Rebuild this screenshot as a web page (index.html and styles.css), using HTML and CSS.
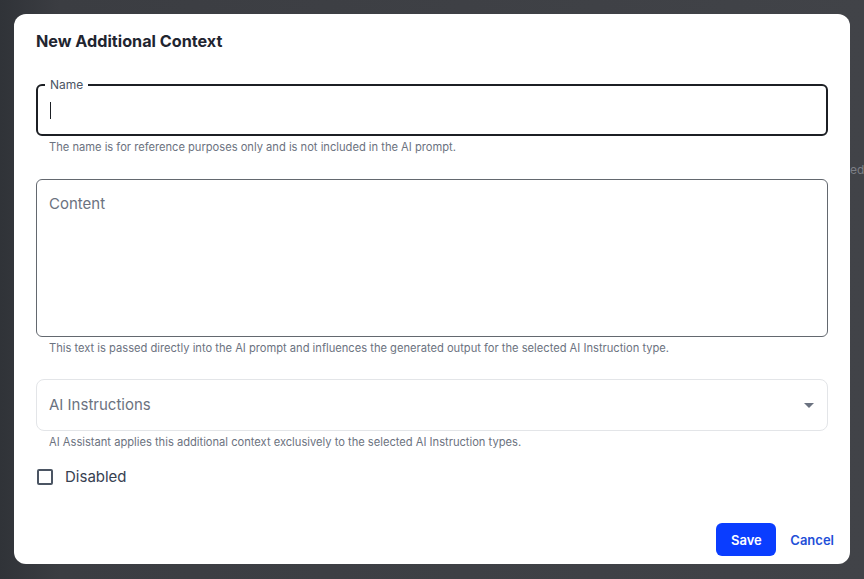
FILE: index.html
```html
<!DOCTYPE html>
<html lang="en">
<head>
    <meta charset="UTF-8">
    <meta name="viewport" content="width=device-width, initial-scale=1.0">
    <title>New Additional Context</title>
    <link rel="stylesheet" href="styles.css">
</head>
<body>
    <span class="behind-text">ed</span>

    <div class="modal">
        <h2 class="modal-title">New Additional Context</h2>

        <div class="field field-focused">
            <span class="field-label">Name</span>
            <span class="caret"></span>
        </div>
        <div class="helper">The name is for reference purposes only and is not included in the AI prompt.</div>

        <div class="field field-area">
            <span class="placeholder">Content</span>
        </div>
        <div class="helper">This text is passed directly into the AI prompt and influences the generated output for the selected AI Instruction type.</div>

        <div class="field field-select">
            <span class="placeholder">AI Instructions</span>
            <svg class="arrow" width="10" height="5" viewBox="0 0 10 5">
                <path d="M0 0 L10 0 L5 5 Z" fill="#6b7280"/>
            </svg>
        </div>
        <div class="helper">AI Assistant applies this additional context exclusively to the selected AI Instruction types.</div>

        <label class="check-row">
            <span class="checkbox"></span>
            <span>Disabled</span>
        </label>

        <div class="modal-footer">
            <button class="btn-save">Save</button>
            <button class="btn-cancel">Cancel</button>
        </div>
    </div>
</body>
</html>
```

FILE: styles.css
```css
* {
    margin: 0;
    padding: 0;
    box-sizing: border-box;
    font-family: Inter, "Noto Sans", sans-serif;
}

body {
    width: 864px;
    height: 579px;
    padding: 14px;
    background: linear-gradient(to right, #303338 0, #3b3d42 60px, #414348 100%);
    position: relative;
    overflow: hidden;
}

.behind-text {
    position: absolute;
    left: 850px;
    top: 161px;
    font-size: 12px;
    line-height: 18px;
    color: #7c7f85;
}

.modal {
    position: relative;
    width: 836px;
    height: 550px;
    background-color: #fff;
    border-radius: 12px;
    padding: 15px 22px 8px 22px;
    display: flex;
    flex-direction: column;
}

.modal-title {
    font-size: 16.2px;
    line-height: 24px;
    font-weight: 700;
    color: #1f2530;
    margin-bottom: 31px;
}

.field {
    position: relative;
    border: 1px solid #63686f;
    border-radius: 6px;
    display: flex;
    align-items: center;
    padding: 0 12px;
}

.field-focused {
    height: 52px;
    border: 2px solid #1c1f24;
}

.field-label {
    position: absolute;
    left: 7px;
    top: -8px;
    padding: 0 5px;
    background: #fff;
    font-size: 12px;
    line-height: 14px;
    color: #4b5563;
}

.caret {
    width: 1px;
    height: 17px;
    background-color: #1c1f24;
}

.field-area {
    height: 158px;
    margin-top: 24px;
    align-items: flex-start;
    padding-top: 14px;
}

.field-select {
    height: 52px;
    margin-top: 23px;
    border-color: #e3e5e8;
    border-radius: 8px;
    justify-content: space-between;
    padding-right: 13px;
}

.placeholder {
    font-size: 15px;
    line-height: 20px;
    color: #6b7280;
}

.helper {
    margin-top: 3px;
    padding-left: 13px;
    font-size: 11.15px;
    line-height: 16px;
    color: #6b7280;
}

.check-row {
    margin-top: 17px;
    display: flex;
    align-items: center;
    gap: 12px;
    font-size: 15px;
    line-height: 20px;
    color: #374151;
}

.checkbox {
    width: 16px;
    height: 16px;
    margin-left: 1px;
    border: 2px solid #4b5563;
    border-radius: 2px;
}

.modal-footer {
    margin-top: auto;
    margin-right: -6px;
    display: flex;
    justify-content: flex-end;
    align-items: center;
    gap: 14px;
}

.btn-save {
    width: 60px;
    height: 33px;
    border: none;
    border-radius: 6px;
    background-color: #0a3dff;
    color: #fff;
    font-size: 13px;
    font-weight: 600;
}

.btn-cancel {
    border: none;
    background: none;
    color: #1f4fd8;
    font-size: 13px;
    font-weight: 600;
}
```
